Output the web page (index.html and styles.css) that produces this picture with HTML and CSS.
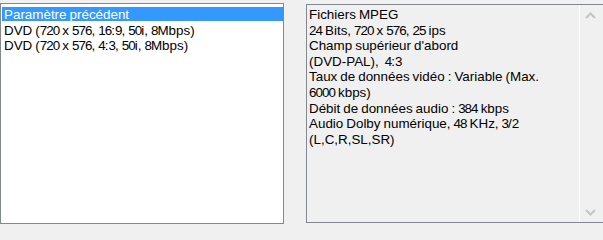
FILE: index.html
```html
<!DOCTYPE html>
<html lang="fr">
<head>
<meta charset="utf-8">
<title>Paramètres</title>
<link rel="stylesheet" href="styles.css">
</head>
<body>
<div class="panel">
  <ul class="list">
    <li class="item selected">Paramètre précédent</li>
    <li class="item">DVD (<span class="num">720</span> x <span class="num">576</span>, <span class="num">16</span>:<span class="num">9</span>, <span class="num">50</span>i, <span class="num">8</span>Mbps)</li>
    <li class="item">DVD (<span class="num">720</span> x <span class="num">576</span>, <span class="num">4</span>:<span class="num">3</span>, <span class="num">50</span>i, <span class="num">8</span>Mbps)</li>
  </ul>
  <div class="info">
    <div class="info-text">
      <div class="line">Fichiers MPEG</div>
      <div class="line"><span class="num">24</span> Bits, <span class="num">720</span> x <span class="num">576</span>, <span class="num">25</span> ips</div>
      <div class="line">Champ supérieur d'abord</div>
      <div class="line">(DVD-PAL),&nbsp; <span class="num">4</span>:<span class="num">3</span></div>
      <div class="line">Taux de données vidéo : Variable (Max.</div>
      <div class="line"><span class="num">6000</span> kbps)</div>
      <div class="line">Débit de données audio : <span class="num">384</span> kbps</div>
      <div class="line">Audio Dolby numérique, <span class="num">48</span> KHz, <span class="num">3</span>/<span class="num">2</span></div>
      <div class="line">(L,C,R,SL,SR)</div>
    </div>
    <div class="scrollbar">
      <div class="arrow">
        <svg width="11" height="7" viewBox="0 0 11 7"><polyline points="1,6 5.5,1.5 10,6" fill="none" stroke="#c4c4c4" stroke-width="2"/></svg>
      </div>
      <div class="arrow">
        <svg width="11" height="7" viewBox="0 0 11 7"><polyline points="1,1 5.5,5.5 10,1" fill="none" stroke="#c4c4c4" stroke-width="2"/></svg>
      </div>
    </div>
  </div>
</div>
</body>
</html>
```

FILE: styles.css
```css
html, body {
  margin: 0;
  padding: 0;
}
body {
  width: 603px;
  height: 225px;
  overflow: hidden;
  background: #f0f0f0;
  font-family: "Liberation Sans", Arial, sans-serif;
  font-size: 13.4px;
  word-spacing: -0.7px;
  color: #000;
}
.num {
  letter-spacing: -0.95px;
}
.panel {
  display: flex;
  align-items: flex-start;
  padding-top: 3px;
}
.list {
  box-sizing: border-box;
  width: 284px;
  height: 221px;
  margin: 0;
  padding: 3px 0 0 1px;
  list-style: none;
  background: #fff;
  border: 1px solid #828790;
}
.item {
  line-height: 15.5px;
  padding-left: 2px;
  white-space: nowrap;
}
.item.selected {
  background: linear-gradient(#3399ff, #3399ff) 0 0 / 100% 14px no-repeat;
  color: #fff;
}
.info {
  box-sizing: border-box;
  display: flex;
  width: 297px;
  height: 219px;
  margin: 1px 0 0 22px;
  background: #f0f0f0;
  border-top: 1px solid #828790;
  border-left: 1px solid #828790;
  border-bottom: 1px solid #828790;
  padding-right: 3px;
}
.info-text {
  flex: 1;
  padding: 2px 0 0 2px;
  white-space: nowrap;
}
.line {
  line-height: 15.6px;
}
.scrollbar {
  width: 20px;
  border-left: 1px solid #ffffff;
  display: flex;
  flex-direction: column;
  justify-content: space-between;
}
.arrow {
  height: 20px;
  display: flex;
  align-items: center;
  justify-content: center;
}
.arrow svg {
  display: block;
}
```
